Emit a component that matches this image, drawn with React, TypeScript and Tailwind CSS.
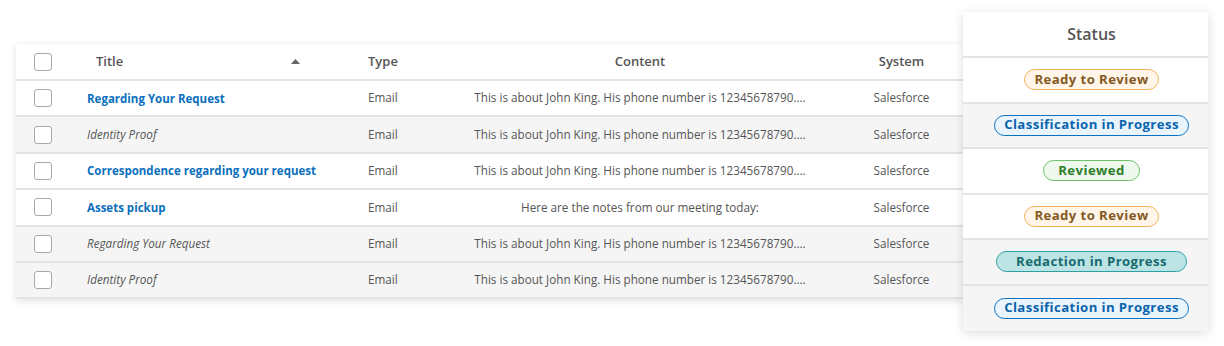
import React from 'react';

type Row = { title: string; link: boolean; content: string; status: Status };
type Status = 'ready' | 'classification' | 'reviewed' | 'redaction';

const LONG = 'This is about John King. His phone number is 12345678790....';

const ROWS: Row[] = [
  { title: 'Regarding Your Request', link: true, content: LONG, status: 'ready' },
  { title: 'Identity Proof', link: false, content: LONG, status: 'classification' },
  { title: 'Correspondence regarding your request', link: true, content: LONG, status: 'reviewed' },
  { title: 'Assets pickup', link: true, content: 'Here are the notes from our meeting today:', status: 'ready' },
  { title: 'Regarding Your Request', link: false, content: LONG, status: 'redaction' },
  { title: 'Identity Proof', link: false, content: LONG, status: 'classification' },
];

const BADGES: Record<Status, { label: string; cls: string }> = {
  ready: { label: 'Ready to Review', cls: 'px-[9px] bg-[#fff5e8] border-[#f4b25c] text-[#845a24]' },
  classification: { label: 'Classification in Progress', cls: 'px-[9px] bg-[#e9f4fd] border-[#0b70c0] text-[#0a64ae]' },
  reviewed: { label: 'Reviewed', cls: 'px-[14px] bg-[#eef8ed] border-[#6fc16a] text-[#2f7e2b]' },
  redaction: { label: 'Redaction in Progress', cls: 'px-[19px] bg-[#bde4e4] border-[#2ba0a4] text-[#186b6f]' },
};

const COLS = 'grid grid-cols-[71px_281px_72px_400px_123px] items-center';

function Checkbox() {
  return <div className="ml-[18px] w-[18px] h-[18px] rounded-[3px] border-[1.5px] border-[#a9a9a9] bg-white" />;
}

// rows 2, 5 and 6 are shaded
const shaded = (i: number) => i === 1 || i >= 4;

export default function App() {
  return (
    <div
      className="w-[1224px] h-[346px] bg-white flex items-start pl-4 pt-3 text-[#555]"
      style={{ fontFamily: '"Open Sans", "Noto Sans", sans-serif' }}
    >
      <div className="mt-8 w-[947px] bg-white shadow-[0_2px_8px_rgba(0,0,0,0.12)]">
        <div className={`${COLS} h-[37px] border-b-2 border-[#e4e4e4] text-[13px] font-semibold text-[#555]`}>
          <Checkbox />
          <div className="flex items-center justify-between w-[213px] pl-[9px]">
            <span>Title</span>
            <svg width="9" height="5" viewBox="0 0 9 5">
              <path d="M0 5 L4.5 0 L9 5 Z" fill="#666" />
            </svg>
          </div>
          <div>Type</div>
          <div className="text-center">Content</div>
          <div className="text-center">System</div>
        </div>
        {ROWS.map((r, i) => (
          <div
            key={i}
            className={`${COLS} h-[36.4px] border-b-2 border-[#e4e4e4] text-[11.7px] ${shaded(i) ? 'bg-[#f5f5f5]' : 'bg-white'}`}
          >
            <Checkbox />
            <div
              className={
                r.link ? 'font-bold text-[#0b6fbd] text-[11.5px]' : 'italic text-[#555]'
              }
            >
              {r.title}
            </div>
            <div>Email</div>
            <div className="text-center">{r.content}</div>
            <div className="text-center">Salesforce</div>
          </div>
        ))}
      </div>

      <div className="w-[245px] bg-white shadow-[0_2px_10px_rgba(0,0,0,0.14)]">
        <div className="h-[46px] flex items-center justify-center pl-3 border-b-2 border-[#e4e4e4] text-[16px] font-semibold text-[#555]">
          Status
        </div>
        {ROWS.map((r, i) => {
          const b = BADGES[r.status];
          return (
            <div
              key={i}
              className={`h-[45.5px] flex items-center justify-center pl-3 border-b-2 border-[#e4e4e4] last:border-b-0 ${shaded(i) ? 'bg-[#f5f5f5]' : 'bg-white'}`}
            >
              <span
                className={`h-[21px] flex items-center rounded-full border-[1.5px] text-[13.2px] font-bold tracking-[0.4px] ${b.cls}`}
              >
                {b.label}
              </span>
            </div>
          );
        })}
      </div>
    </div>
  );
}
